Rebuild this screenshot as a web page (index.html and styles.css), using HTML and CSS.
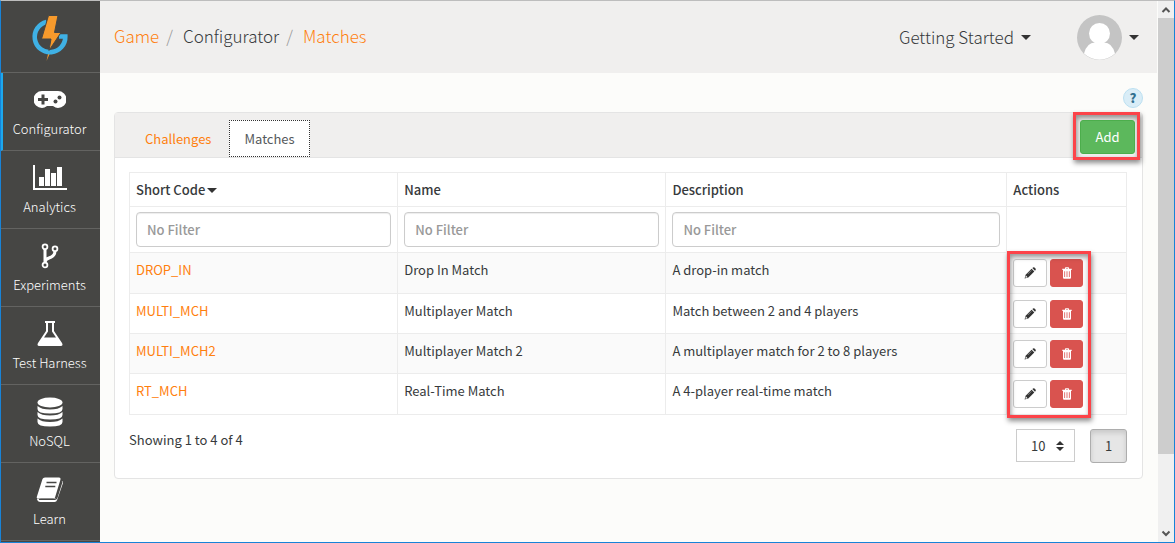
FILE: index.html
```html
<!DOCTYPE html>
<html lang="en">
<head>
<meta charset="utf-8">
<meta name="viewport" content="width=device-width, initial-scale=1">
<title>Configurator - Matches</title>
<link rel="stylesheet" href="styles.css">
</head>
<body>
<svg class="sprite" aria-hidden="true">
  <symbol id="pencil" viewBox="0 0 12 12">
    <path d="M8.3 1 9.1.4q.7-.5 1.4.1l1 1q.6.7.1 1.4L11 3.7zM7.6 1.700l2.700 2.700-6 6L.6 11.600l1-3.900z"/>
    <path d="m1.900 8.600 1.600 1.600-1.700.5-.4-.4z" fill="#fff"/>
    <path d="m3.800 7 3.700-3.700" stroke="#999" stroke-width=".7"/>
  </symbol>
  <symbol id="trash" viewBox="0 0 10 12">
    <path fill-rule="evenodd" d="M3 1.800V1q0-.7.7-.7h2.600Q7 .3 7 1v.8h2.700v1.100H9v7.600q0 1.200-1.100 1.200H2.100Q1 11.700 1 10.500V2.900H.3V1.800zm1 0h2v-.6H4zM2.300 4.200v5.900h.8V4.200zm2.300 0v5.900h.8V4.200zm2.300 0v5.900h.8V4.200z"/>
  </symbol>
</svg>
<div class="window">
  <nav class="sidebar">
    <a class="logo" href="#" aria-label="Home">
      <svg width="38" height="46" viewBox="0 0 38 46">
        <path d="M17.500 37h2l-4 9z" fill="#f79a2c"/>
        <path d="M15.500 7A15.300 15.300 0 1 0 34.300 21.500H28" fill="none" stroke="#3fb1e5" stroke-width="4.600"/>
        <path d="M17.500.5h9.500L23.500 17.500H30L18 35.500l2-11.500h-9.500z" fill="#f79a2c" stroke="#464644" stroke-width="1"/>
      </svg>
    </a>
    <a class="item active" href="#">
      <svg width="32" height="24" viewBox="0 0 32 24">
        <path fill="#fff" d="M8 3h16a8 8 0 0 1 0 17q-2.500 0-5-2h-6q-2.500 2-5 2A8 8 0 0 1 8 3z"/>
        <path d="M9 6.500v10M4 11.500h10" stroke="#464644" stroke-width="3"/>
        <circle cx="25.500" cy="9.500" r="2" fill="#464644"/><circle cx="21.500" cy="13.500" r="2" fill="#464644"/>
      </svg>
      <span>Configurator</span>
    </a>
    <a class="item" href="#">
      <svg width="34" height="26" viewBox="0 0 34 26">
        <path fill="#fff" d="M0 0h2v23h32v2H0zM6 12h5v9H6zM12 4h5v17h-5zM18 8h5v13h-5zM24 2h5v19h-5z"/>
      </svg>
      <span>Analytics</span>
    </a>
    <a class="item" href="#">
      <svg width="18" height="26" viewBox="0 0 18 26" fill="none" stroke="#fff">
        <circle cx="4" cy="3.800" r="2.400" stroke-width="1.800"/><circle cx="4" cy="22" r="2.400" stroke-width="1.800"/><circle cx="14" cy="5.800" r="2.400" stroke-width="1.800"/>
        <path d="M4 6v13.500q0-3 4-4.500 6-2 6-7" stroke-width="3"/>
      </svg>
      <span>Experiments</span>
    </a>
    <a class="item" href="#">
      <svg width="26" height="26" viewBox="0 0 26 26">
        <path fill="#fff" fill-rule="evenodd" d="M8 0h10v2h-1v8l8 12q1.500 3-1.500 3h-21Q-.5 25 1 22L9 10V2H8zm3 2v8.500L7 16.500h12l-4-6V2z"/>
      </svg>
      <span>Test Harness</span>
    </a>
    <a class="item" href="#">
      <svg width="26" height="30" viewBox="0 0 26 30" fill="#fff">
        <ellipse cx="13" cy="5.500" rx="12.500" ry="5"/>
        <path d="M.5 9q4 3.500 12.500 3.500T25.500 9v3q0 4.500-12.500 4.500T.5 12zM.5 15q4 3.500 12.500 3.500T25.500 15v3q0 4.500-12.500 4.500T.5 18zM.5 21.500Q4.500 25 13 25t12.500-3.500v3.500Q25.500 29.500 13 29.500T.5 25z"/>
      </svg>
      <span>NoSQL</span>
    </a>
    <a class="item" href="#">
      <svg width="28" height="26" viewBox="0 0 28 26">
        <path fill="#fff" d="M9 .5h14q2 0 1.500 2L19 20.500q-.6 1.800-2.500 1.800H3.500q-1.500 0-1.500-1.500Q2.300 19 4 19L1 22q.5 3 3.500 3h14q2 0 2.600-2L27 6q.4-1.500-1-2l-5.500 17.500H5Q1 22 .6 20.500L6.500 2Q7 .5 9 .5z"/>
        <path d="M10.500 5.500h10M9.300 9.500h10" stroke="#464644" stroke-width="1.500"/>
        <path d="M3 22.300h16q1.500 0 2-2L26 4.500" fill="none" stroke="#464644" stroke-width="1.300"/>
      </svg>
      <span>Learn</span>
    </a>
  </nav>
  <div class="page">
    <header class="topbar">
      <ol class="crumbs">
        <li><a href="#">Game</a></li>
        <li>Configurator</li>
        <li><a href="#">Matches</a></li>
      </ol>
      <div class="account">
        <button class="plain" type="button">Getting Started <i class="caret"></i></button>
        <button class="plain" type="button" aria-label="Account">
          <svg width="45" height="45" viewBox="0 0 45 45">
            <circle cx="22.500" cy="22.500" r="22.500" fill="#c4c4c4"/>
            <circle cx="22.500" cy="18.500" r="10.500" fill="#fff"/>
            <path fill="#fff" d="M7 38.500Q10 27.500 18 27.500h9Q35 27.500 38 38.500A22.500 22.500 0 0 1 7 38.500z"/>
          </svg>
          <i class="caret"></i>
        </button>
      </div>
    </header>
    <main>
      <button class="help" type="button" aria-label="Help">?</button>
      <section class="panel">
        <div class="tabs">
          <a class="tab" href="#">Challenges</a>
          <a class="tab current" href="#">Matches</a>
          <div class="add-wrap marked"><button class="add" type="button">Add</button></div>
        </div>
        <div class="body">
          <table>
            <colgroup><col class="c-code"><col class="c-name"><col class="c-desc"><col class="c-act"></colgroup>
            <thead>
              <tr><th>Short Code<i class="caret sort"></i></th><th>Name</th><th>Description</th><th>Actions</th></tr>
              <tr class="filters">
                <td><input type="text" placeholder="No Filter" aria-label="Filter short code"></td>
                <td><input type="text" placeholder="No Filter" aria-label="Filter name"></td>
                <td><input type="text" placeholder="No Filter" aria-label="Filter description"></td>
                <td></td>
              </tr>
            </thead>
            <tbody>
              <tr><td><a href="#">DROP_IN</a></td><td>Drop In Match</td><td>A drop-in match</td>
                <td class="anchor"><div class="actions"><button class="edit" type="button" aria-label="Edit"><svg width="12" height="12"><use href="#pencil"/></svg></button><button class="delete" type="button" aria-label="Delete"><svg width="10" height="12"><use href="#trash"/></svg></button></div><div class="frame"></div></td></tr>
              <tr><td><a href="#">MULTI_MCH</a></td><td>Multiplayer Match</td><td>Match between 2 and 4 players</td>
                <td><div class="actions"><button class="edit" type="button" aria-label="Edit"><svg width="12" height="12"><use href="#pencil"/></svg></button><button class="delete" type="button" aria-label="Delete"><svg width="10" height="12"><use href="#trash"/></svg></button></div></td></tr>
              <tr><td><a href="#">MULTI_MCH2</a></td><td>Multiplayer Match 2</td><td>A multiplayer match for 2 to 8 players</td>
                <td><div class="actions"><button class="edit" type="button" aria-label="Edit"><svg width="12" height="12"><use href="#pencil"/></svg></button><button class="delete" type="button" aria-label="Delete"><svg width="10" height="12"><use href="#trash"/></svg></button></div></td></tr>
              <tr><td><a href="#">RT_MCH</a></td><td>Real-Time Match</td><td>A 4-player real-time match</td>
                <td><div class="actions"><button class="edit" type="button" aria-label="Edit"><svg width="12" height="12"><use href="#pencil"/></svg></button><button class="delete" type="button" aria-label="Delete"><svg width="10" height="12"><use href="#trash"/></svg></button></div></td></tr>
            </tbody>
          </table>
          <div class="foot">
            <p>Showing 1 to 4 of 4</p>
            <div class="select">
              <select aria-label="Rows per page"><option>10</option><option>25</option></select>
              <svg width="8" height="10" viewBox="0 0 8 10"><path d="M4 0l4 4H0zM0 6h8l-4 4z" fill="#333"/></svg>
            </div>
            <button class="pager" type="button">1</button>
          </div>
        </div>
      </section>
    </main>
  </div>
  <div class="scrollbar" aria-hidden="true">
    <svg width="16" height="17" viewBox="0 0 16 17"><path d="m4.500 11 3.500-3.500 3.500 3.500" fill="none" stroke="#555" stroke-width="2"/></svg>
    <div class="track"><div class="thumb"></div></div>
    <svg width="16" height="17" viewBox="0 0 16 17"><path d="m4.500 6.500 3.500 3.500 3.500-3.500" fill="none" stroke="#555" stroke-width="2"/></svg>
  </div>
</div>
</body>
</html>
```
FILE: styles.css
```css
* { box-sizing: border-box; }
body {
  margin: 0;
  font-family: "Noto Sans CJK SC", "Noto Sans", sans-serif;
  font-size: 13px;
  line-height: 20px;
  color: #373a3c;
}
button, input, select { font: inherit; color: inherit; margin: 0; }
button { cursor: pointer; }
a { color: #ff7f0e; text-decoration: none; }
.sprite { position: absolute; width: 0; height: 0; }
.window {
  display: flex;
  min-height: 100vh;
  border: 1px solid #1883d7;
  border-top-color: #bdbdbd;
  background: #fcfcfa;
}
.sidebar { flex: 0 0 99px; background: #464644; }
.logo, .item {
  display: flex;
  flex-direction: column;
  align-items: center;
  padding-right: 2px;
  border-bottom: 1px solid #636361;
}
.logo { height: 72px; padding-top: 14px; }
.item { height: 78px; color: #fff; font-weight: 300; }
.item svg { height: 30px; margin: 12px 0 4px; }
.active { border-left: 2px solid #1ca8ee; padding-right: 4px; }
.page { flex: 1; min-width: 0; }
.topbar {
  display: flex;
  justify-content: space-between;
  height: 72px;
  padding: 0 18px 0 14px;
  background: #f0efee;
  font-size: 17px;
  font-weight: 300;
}
.crumbs { display: flex; align-items: center; list-style: none; margin: 0; padding: 0 0 2px; }
.crumbs li + li::before { content: "/"; padding: 0 10px 0 7px; color: #999; }
.account { display: flex; align-items: center; gap: 46px; }
.plain { display: flex; align-items: center; gap: 7px; border: 0; padding: 0; background: none; }
.caret {
  display: inline-block;
  border: 5px solid transparent;
  border-top-color: #333;
  border-bottom: 0;
}
.sort { margin-left: 2px; vertical-align: 2px; }
main { display: flex; flex-direction: column; padding: 15px 14px; }
.help {
  align-self: flex-end;
  width: 20px;
  height: 20px;
  margin-bottom: 4px;
  padding: 0;
  border: 1px solid #bce0f1;
  border-radius: 50%;
  background: #d9edf7;
  color: #31708f;
  font-weight: 900;
  line-height: 16px;
}
.panel { border: 1px solid #e4e4e4; border-radius: 4px; background: #fff; }
.tabs {
  display: flex;
  height: 45px;
  padding: 7px 2px 0 15px;
  border-bottom: 1px solid #e4e4e4;
  background: #f0efee;
}
.tab { height: 37px; padding: 9px 14px; border: 1px dotted transparent; line-height: 18px; }
.current { margin-left: 3px; border-color: #333; background: #fff; color: #55595c; }
.marked, .frame {
  border: 3px solid #fc4349;
  box-shadow: 1px 3px 5px rgba(0, 0, 0, .45), inset 1px 3px 5px rgba(0, 0, 0, .4);
}
.add-wrap { z-index: 1; align-self: flex-start; margin: -8px 0 -8px auto; padding: 5px 2px 3px 4px; }
.add {
  width: 55px;
  height: 34px;
  padding: 0;
  border: 1px solid #4cae4c;
  border-radius: 3px;
  background: #5cb85c;
  color: #fff;
}
.body { padding: 14px 15px 15px 14px; }
table { width: 100%; table-layout: fixed; border-collapse: collapse; }
.c-code, .c-name { width: 26.900%; }
.c-desc { width: 34.200%; }
th, td { border: 1px solid #ececec; padding: 0 6px; text-align: left; }
th { height: 34px; font-weight: 500; }
.filters td { height: 46px; }
input {
  display: block;
  width: 100%;
  height: 35px;
  padding: 0 10px;
  border: 1px solid #ccc;
  border-radius: 4px;
  font-weight: 500;
  box-shadow: inset 0 1px 1px rgba(0, 0, 0, .075);
}
input::placeholder { color: #999; opacity: 1; }
tbody td { height: 40px; padding-bottom: 6px; }
tbody td:last-child { padding-bottom: 0; }
tbody tr:first-child td, tbody tr:last-child td { height: 41px; }
tbody tr:nth-child(odd) { background: #fafafa; }
.anchor { position: relative; }
.frame { position: absolute; top: -2px; left: 0; width: 84px; height: 167px; pointer-events: none; }
.actions { display: flex; gap: 3px; }
.actions button {
  display: flex;
  align-items: center;
  justify-content: center;
  width: 34px;
  height: 28px;
  padding: 0;
  border: 1px solid #ccc;
  border-radius: 3px;
  background: #fff;
  fill: #333;
}
.actions .delete { width: 33px; border-color: #d9534f; background: #d9534f; fill: #fff; }
.foot { display: flex; align-items: flex-start; padding-top: 14px; }
.foot p { flex: 1; margin: 0; padding-top: 1px; }
.select { display: flex; align-items: center; position: relative; }
.select svg { position: absolute; right: 11px; pointer-events: none; }
select {
  appearance: none;
  width: 59px;
  height: 33px;
  padding: 0 14px;
  border: 1px solid #ccc;
  border-radius: 0;
  background: #fff;
}
.pager {
  width: 37px;
  height: 34px;
  margin-left: 15px;
  padding: 0;
  border: 1px solid #adadad;
  border-radius: 3px;
  background: #e6e6e6;
  box-shadow: inset 0 3px 5px rgba(0, 0, 0, .125);
}
.scrollbar {
  display: flex;
  flex-direction: column;
  flex: 0 0 17px;
  border-left: 1px solid #fcfcfa;
  background: #f0f0f0;
}
.track { flex: 1; }
.thumb { height: 86%; background: #cdcdcd; }
```
